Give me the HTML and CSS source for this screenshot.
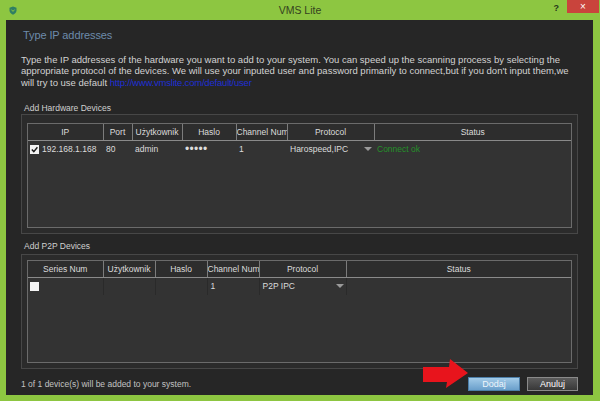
FILE: index.html
```html
<!DOCTYPE html>
<html>
<head>
<meta charset="utf-8">
<link rel="stylesheet" href="styles.css">
</head>
<body>
<div class="window">
  <div class="titlebar">
    <svg class="appicon" viewBox="0 0 8 9"><path d="M4 0.5 L7.5 1.8 V4.5 C7.5 6.6 5.8 8 4 8.7 C2.2 8 0.5 6.6 0.5 4.5 V1.8 Z" fill="#2f7f63"/><path d="M2.4 3.6 L4 5.4 L5.6 3.6" fill="none" stroke="#8dc641" stroke-width="1"/></svg>
    <div class="title">VMS Lite</div>
    <div class="controls">
      <span class="help">?</span>
      <span class="close">×</span>
    </div>
  </div>
  <div class="content">
    <h1 class="heading">Type IP addresses</h1>
    <p class="intro">Type the IP addresses of the hardware you want to add to your system. You can speed up the scanning process by selecting the<br>appropriate protocol of the devices. We will use your inputed user and password primarily to connect,but if you don't input them,we<br>will try to use default <a href="#">http://www.vmslite.com/default/user</a></p>

    <div class="label">Add Hardware Devices</div>
    <div class="group g1">
      <div class="gridbox">
        <table class="grid">
          <colgroup>
            <col class="w76"><col class="w29"><col class="w50"><col class="w54"><col class="w51"><col class="w87"><col>
          </colgroup>
          <thead>
            <tr><th>IP</th><th>Port</th><th>Użytkownik</th><th>Haslo</th><th>Channel Num</th><th>Protocol</th><th>Status</th></tr>
          </thead>
          <tbody>
            <tr>
              <td class="first"><span class="check on"><svg viewBox="0 0 9 9"><path d="M1.8 4.6 L3.8 6.6 L7.4 2.2" fill="none" stroke="#1a1a1a" stroke-width="1.4"/></svg></span>192.168.1.168</td>
              <td>80</td>
              <td>admin</td>
              <td class="dots">•••••</td>
              <td>1</td>
              <td><div class="combo"><span>Harospeed,IPC</span><span class="caret"></span></div></td>
              <td class="ok">Connect ok</td>
            </tr>
          </tbody>
        </table>
      </div>
    </div>

    <div class="label p2p">Add P2P Devices</div>
    <div class="group g2">
      <div class="gridbox">
        <table class="grid">
          <colgroup>
            <col class="w76"><col class="w52"><col class="w52"><col class="w52"><col class="w87"><col>
          </colgroup>
          <thead>
            <tr><th>Series Num</th><th>Użytkownik</th><th>Haslo</th><th>Channel Num</th><th>Protocol</th><th>Status</th></tr>
          </thead>
          <tbody>
            <tr class="sep">
              <td class="first"><span class="check"></span></td>
              <td></td>
              <td></td>
              <td>1</td>
              <td><div class="combo"><span>P2P IPC</span><span class="caret"></span></div></td>
              <td></td>
            </tr>
          </tbody>
        </table>
      </div>
    </div>

    <div class="footer">
      <span class="count">1 of 1 device(s) will be added to your system.</span>
      <div class="buttons">
        <svg class="arrow" viewBox="0 0 46 34"><polygon points="0,11 26,11 27,3 45,17 23,32 24,26 0,26" fill="#e8141c"/></svg>
        <button class="btn btn-primary">Dodaj</button>
        <button class="btn btn-secondary">Anuluj</button>
      </div>
    </div>
  </div>
</div>
</body>
</html>
```

FILE: styles.css
```css
body {
  margin: 0;
}

.window {
  width: 600px;
  height: 401px;
  background: #8dc641;
  display: flex;
  flex-direction: column;
  font-family: "Liberation Sans", Arial, sans-serif;
  overflow: hidden;
}

.titlebar {
  height: 20px;
  flex: none;
  display: grid;
  grid-template-columns: 1fr auto 1fr;
  align-items: start;
}

.appicon {
  width: 8px;
  height: 9px;
  margin: 6px 0 0 9px;
}

.title {
  font-size: 10.5px;
  line-height: 21px;
  color: #34421f;
}

.controls {
  justify-self: end;
  display: flex;
  align-items: flex-start;
}

.help {
  font-size: 9px;
  font-weight: bold;
  color: #26361a;
  margin: 3px 8px 0 0;
}

.close {
  width: 32px;
  height: 13px;
  margin-right: 1px;
  background: #c9443c;
  color: #fff;
  font-size: 10px;
  line-height: 13px;
  text-align: center;
}

.content {
  flex: 1;
  margin: 0 7px 7px 6px;
  background: #262626;
  padding: 0 15px;
  display: flex;
  flex-direction: column;
}

.heading {
  margin: 8px 0 0 2px;
  font-size: 11px;
  line-height: 14px;
  font-weight: normal;
  color: #6d8bab;
  letter-spacing: -0.1px;
}

.intro {
  margin: 12px 0 0 0;
  font-size: 9.5px;
  line-height: 11.3px;
  color: #d2d2d2;
  white-space: nowrap;
}

.intro a {
  color: #1f2fd4;
  text-decoration: none;
  letter-spacing: -0.2px;
}

.label {
  font-size: 8.5px;
  line-height: 11px;
  color: #d0d0d0;
  margin: 15px 0 0 3px;
}

.label.p2p {
  margin-top: 7px;
  margin-bottom: 2px;
}

.group {
  border: 1px solid #474747;
  background: #2b2b2b;
  padding: 8px 5px 5px;
  box-sizing: border-box;
}

.g1 {
  height: 120px;
}

.g2 {
  height: 115px;
  padding-top: 5px;
}

.gridbox {
  height: 100%;
  border: 1px solid #6b6b6b;
  background: #333333;
  box-sizing: border-box;
}

.grid {
  border-collapse: collapse;
  table-layout: fixed;
  width: 100%;
  font-size: 8.5px;
  color: #dcdcdc;
}

.w29 { width: 29px; }
.w50 { width: 50px; }
.w51 { width: 51px; }
.w52 { width: 52px; }
.w54 { width: 54px; }
.w76 { width: 75px; }
.w87 { width: 87px; }

.grid th {
  height: 16px;
  padding: 0;
  font-weight: normal;
  text-align: center;
  white-space: nowrap;
  overflow: hidden;
  background: #2d2d2d;
  border-left: 1px solid #7c7c7c;
  border-bottom: 1px solid #8a8a8a;
}

.grid th:first-child {
  border-left: none;
}

.grid td {
  height: 17px;
  padding: 0 3px;
  white-space: nowrap;
  overflow: hidden;
}

.grid td.first {
  padding-left: 2px;
}

.sep td {
  border-left: 1px solid #2a2a2a;
}

.sep td:first-child {
  border-left: none;
}

.check {
  display: inline-block;
  width: 9px;
  height: 9px;
  background: #f4f4f4;
  vertical-align: -2px;
  margin-right: 3px;
}

.check svg {
  display: block;
  width: 9px;
  height: 9px;
}

.dots {
  font-size: 12px;
  letter-spacing: 0.3px;
}

.combo {
  display: flex;
  justify-content: space-between;
  align-items: center;
}

.caret {
  width: 0;
  height: 0;
  border-left: 4px solid transparent;
  border-right: 4px solid transparent;
  border-top: 4px solid #9a9a9a;
  margin-right: -1px;
}

.ok {
  color: #25902a;
}

.footer {
  display: flex;
  align-items: center;
  justify-content: space-between;
  padding: 8px 0 4px;
  height: 14px;
}

.count {
  font-size: 8.5px;
  color: #c2c2c2;
}

.buttons {
  position: relative;
  display: flex;
  gap: 7px;
}

.btn {
  height: 14px;
  padding: 0;
  font-family: "Liberation Sans", Arial, sans-serif;
  font-size: 9px;
  line-height: 12px;
  border: 1px solid;
  box-sizing: border-box;
  text-align: center;
}

.btn-primary {
  width: 52px;
  background: linear-gradient(#a2cbe8, #6a9fcb);
  border-color: #4c7ea8;
  color: #eef5fb;
}

.btn-secondary {
  width: 51px;
  background: linear-gradient(#5c5c5c, #383838);
  border-color: #8a8a8a;
  color: #ffffff;
}

.arrow {
  position: absolute;
  left: -45px;
  top: -21px;
  width: 46px;
  height: 34px;
}
```
